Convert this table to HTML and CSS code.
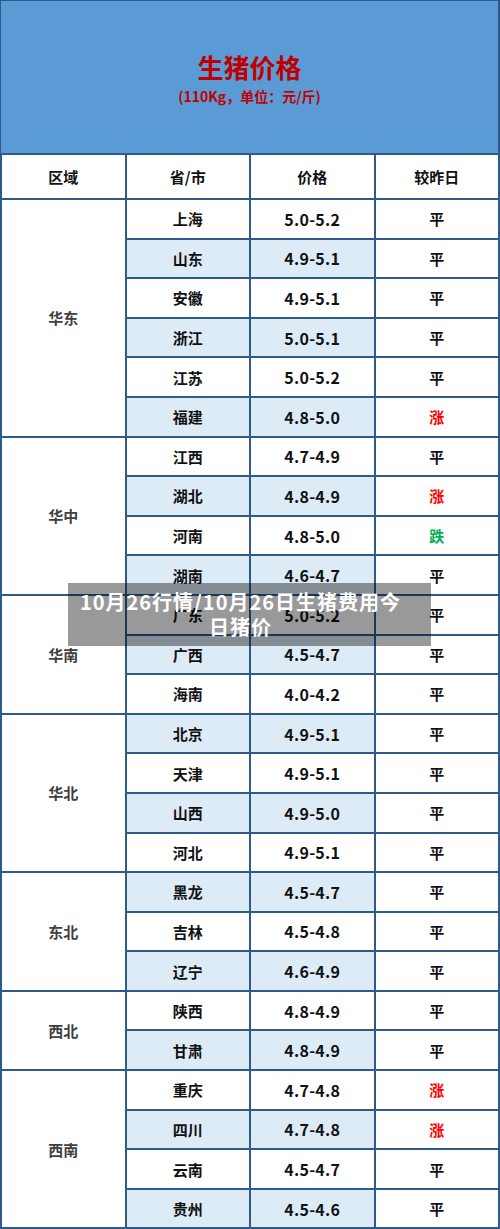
FILE: index.html
```html
<!DOCTYPE html>
<html lang="zh">
<head>
<meta charset="utf-8">
<link rel="stylesheet" href="styles.css">
</head>
<body>
<div class="page">
  <div class="banner">
    <div class="title">生猪价格</div>
    <div class="subtitle">(110Kg，单位：元/斤)</div>
  </div>
  <table class="prices">
    <thead>
      <tr><th>区域</th><th>省/市</th><th>价格</th><th>较昨日</th></tr>
    </thead>
    <tbody>
      <tr><td class="region" rowspan="6">华东</td><td class="prov">上海</td><td class="price">5.0-5.2</td><td class="flat">平</td></tr>
      <tr class="alt"><td class="prov">山东</td><td class="price">4.9-5.1</td><td class="flat">平</td></tr>
      <tr><td class="prov">安徽</td><td class="price">4.9-5.1</td><td class="flat">平</td></tr>
      <tr class="alt"><td class="prov">浙江</td><td class="price">5.0-5.1</td><td class="flat">平</td></tr>
      <tr><td class="prov">江苏</td><td class="price">5.0-5.2</td><td class="flat">平</td></tr>
      <tr class="alt"><td class="prov">福建</td><td class="price">4.8-5.0</td><td class="up">涨</td></tr>
      <tr><td class="region" rowspan="4">华中</td><td class="prov">江西</td><td class="price">4.7-4.9</td><td class="flat">平</td></tr>
      <tr class="alt"><td class="prov">湖北</td><td class="price">4.8-4.9</td><td class="up">涨</td></tr>
      <tr><td class="prov">河南</td><td class="price">4.8-5.0</td><td class="down">跌</td></tr>
      <tr class="alt"><td class="prov">湖南</td><td class="price">4.6-4.7</td><td class="flat">平</td></tr>
      <tr><td class="region" rowspan="3">华南</td><td class="prov">广东</td><td class="price">5.0-5.2</td><td class="flat">平</td></tr>
      <tr class="alt"><td class="prov">广西</td><td class="price">4.5-4.7</td><td class="flat">平</td></tr>
      <tr><td class="prov">海南</td><td class="price">4.0-4.2</td><td class="flat">平</td></tr>
      <tr class="alt"><td class="region" rowspan="4">华北</td><td class="prov">北京</td><td class="price">4.9-5.1</td><td class="flat">平</td></tr>
      <tr><td class="prov">天津</td><td class="price">4.9-5.1</td><td class="flat">平</td></tr>
      <tr class="alt"><td class="prov">山西</td><td class="price">4.9-5.0</td><td class="flat">平</td></tr>
      <tr><td class="prov">河北</td><td class="price">4.9-5.1</td><td class="flat">平</td></tr>
      <tr class="alt"><td class="region" rowspan="3">东北</td><td class="prov">黑龙</td><td class="price">4.5-4.7</td><td class="flat">平</td></tr>
      <tr><td class="prov">吉林</td><td class="price">4.5-4.8</td><td class="flat">平</td></tr>
      <tr class="alt"><td class="prov">辽宁</td><td class="price">4.6-4.9</td><td class="flat">平</td></tr>
      <tr><td class="region" rowspan="2">西北</td><td class="prov">陕西</td><td class="price">4.8-4.9</td><td class="flat">平</td></tr>
      <tr class="alt"><td class="prov">甘肃</td><td class="price">4.8-4.9</td><td class="flat">平</td></tr>
      <tr><td class="region" rowspan="4">西南</td><td class="prov">重庆</td><td class="price">4.7-4.8</td><td class="up">涨</td></tr>
      <tr class="alt"><td class="prov">四川</td><td class="price">4.7-4.8</td><td class="up">涨</td></tr>
      <tr><td class="prov">云南</td><td class="price">4.5-4.7</td><td class="flat">平</td></tr>
      <tr class="alt"><td class="prov">贵州</td><td class="price">4.5-4.6</td><td class="flat">平</td></tr>
    </tbody>
  </table>
  <div class="caption">10月26行情/10月26日生猪费用今日猪价</div>
</div>
</body>
</html>
```
FILE: styles.css
```css
html, body {
  margin: 0;
  padding: 0;
  background: #ffffff;
}
.page {
  position: relative;
  width: 500px;
  height: 1229px;
  overflow: hidden;
  font-family: "Noto Sans CJK SC", "Microsoft YaHei", sans-serif;
  box-sizing: border-box;
}
.banner {
  box-sizing: border-box;
  height: 153px;
  background: #5b9bd5;
  border: 1px solid #2f5b8c;
  border-right-width: 2px;
  border-bottom: none;
  display: flex;
  flex-direction: column;
  align-items: center;
  justify-content: center;
  color: #c00000;
  font-weight: bold;
}
.title {
  font-size: 26px;
  line-height: 36px;
}
.subtitle {
  font-size: 14px;
  line-height: 18px;
  margin-top: 2px;
}
.prices {
  width: 500px;
  border-collapse: collapse;
  table-layout: fixed;
}
.prices th, .prices td {
  border: 2px solid #2f5b8c;
  text-align: center;
  padding: 0;
  font-weight: bold;
  font-size: 15px;
  color: #111111;
}
.prices th {
  height: 43px;
  background: #ffffff;
}
.prices td {
  height: 37.6px;
}
.prices .price {
  font-size: 16px;
  letter-spacing: 0.3px;
}
.prices tr.alt .prov,
.prices tr.alt .price {
  background: #ddebf7;
}
.prices .region {
  color: #404040;
  background: #ffffff;
}
.prices .flat { color: #111111; }
.prices .up { color: #ff0000; }
.prices .down { color: #00b050; }
.caption {
  position: absolute;
  left: 68px;
  top: 583px;
  width: 363px;
  height: 63px;
  box-sizing: border-box;
  padding: 6px 26px 0 8px;
  background: rgba(0, 0, 0, 0.4);
  color: #ffffff;
  font-weight: bold;
  font-size: 20px;
  line-height: 25px;
  letter-spacing: 1px;
  text-align: center;
}
```
